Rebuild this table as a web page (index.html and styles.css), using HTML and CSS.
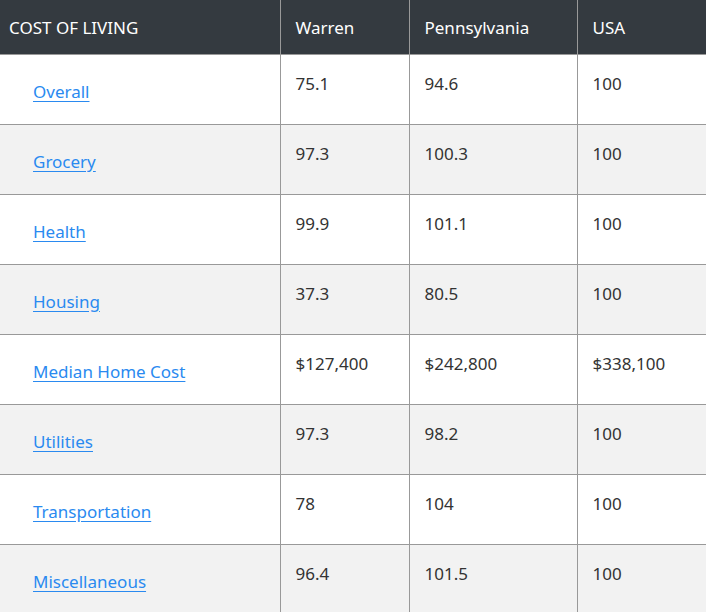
FILE: index.html
```html
<!DOCTYPE html>
<html>
<head>
<meta charset="utf-8">
<link rel="stylesheet" href="styles.css">
</head>
<body>
<table class="col-table">
  <colgroup>
    <col class="c1"><col class="c2"><col class="c3"><col class="c4">
  </colgroup>
  <thead>
    <tr><th class="first">COST OF LIVING</th><th>Warren</th><th>Pennsylvania</th><th>USA</th></tr>
  </thead>
  <tbody>
    <tr><td class="label"><a href="#">Overall</a></td><td>75.1</td><td>94.6</td><td>100</td></tr>
    <tr><td class="label"><a href="#">Grocery</a></td><td>97.3</td><td>100.3</td><td>100</td></tr>
    <tr><td class="label"><a href="#">Health</a></td><td>99.9</td><td>101.1</td><td>100</td></tr>
    <tr><td class="label"><a href="#">Housing</a></td><td>37.3</td><td>80.5</td><td>100</td></tr>
    <tr><td class="label"><a href="#">Median Home Cost</a></td><td>$127,400</td><td>$242,800</td><td>$338,100</td></tr>
    <tr><td class="label"><a href="#">Utilities</a></td><td>97.3</td><td>98.2</td><td>100</td></tr>
    <tr><td class="label"><a href="#">Transportation</a></td><td>78</td><td>104</td><td>100</td></tr>
    <tr><td class="label"><a href="#">Miscellaneous</a></td><td>96.4</td><td>101.5</td><td>100</td></tr>
  </tbody>
</table>
</body>
</html>
```
FILE: styles.css
```css
html, body {
  margin: 0;
  padding: 0;
  background: #fff;
}
body {
  font-family: "Noto Sans", "Open Sans", sans-serif;
  font-size: 17px;
  color: #333;
}
.col-table {
  width: 706px;
  border-collapse: collapse;
  table-layout: fixed;
}
.c1 { width: 280px; }
.c2 { width: 129px; }
.c3 { width: 168px; }
.c4 { width: 129px; }
.col-table th {
  background: #343a40;
  color: #fff;
  font-weight: 400;
  text-align: left;
  height: 54px;
  box-sizing: border-box;
  padding: 2px 15px 0;
  line-height: 24px;
  vertical-align: middle;
  border-left: 1px solid #999;
  border-bottom: 1px solid #999;
}
.col-table th.first {
  padding-left: 9px;
  border-left: 0;
}
.col-table td {
  height: 70px;
  box-sizing: border-box;
  padding: 17px 15px 0;
  line-height: 24px;
  vertical-align: top;
  border-left: 1px solid #999;
  border-bottom: 1px solid #999;
  color: #333;
}
.col-table td.label {
  border-left: 0;
  padding: 0 15px 0 33px;
  vertical-align: middle;
}
.col-table tbody tr:nth-child(even) td {
  background: #f2f2f2;
}
.col-table a {
  color: #2a8af0;
  text-decoration: underline;
  text-underline-offset: 3px;
  display: inline-block;
  padding-top: 5px;
}
```
